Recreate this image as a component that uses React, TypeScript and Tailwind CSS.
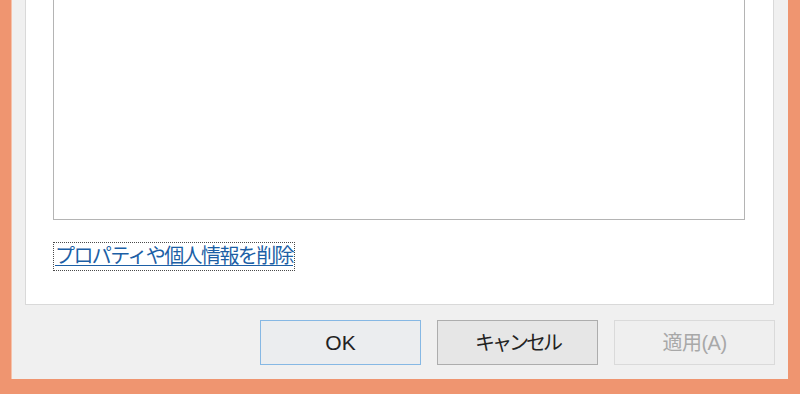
export default function App() {
  return (
    <div className="flex h-[394px] w-[800px] bg-[#ef9570] pb-[15px] pl-[11px] pr-[12px] font-['Liberation_Sans','Noto_Sans_CJK_JP',sans-serif]">
      <div className="flex flex-1 flex-col border-l border-[#f6c2aa] bg-[#f0f0f0]">
        {/* properties panel */}
        <div className="ml-[13px] mr-[14px] h-[305px] border-x border-b border-[#d9d9d9] bg-white pl-[27px]">
          <div className="h-[220px] w-[692px] border-x border-b border-[#b4b4b4] bg-white" />
          <a
            href="#"
            className="mt-[22px] inline-block border border-dotted border-[#4a4a4a] px-[1px] text-[20px] leading-[27px] tracking-[-1.6px] text-[#1c5fa6] underline decoration-1 underline-offset-2"
          >
            プロパティや個人情報を削除
          </a>
        </div>

        <div className="mt-[15px] flex justify-end gap-[16px] pr-[13px]">
          <button className="h-[45px] w-[161px] border border-[#86b8e4] bg-[#ebedef] text-[21px] text-[#222]">
            OK
          </button>
          <button className="h-[45px] w-[161px] border border-[#adadad] bg-[#e6e6e6] text-[20px] tracking-[-3px] text-[#222]">
            キャンセル
          </button>
          <button
            disabled
            className="h-[45px] w-[161px] border border-[#dadada] bg-[#efefef] text-[20px] tracking-[-0.5px] text-[#a8a8a8]"
          >
            適用(A)
          </button>
        </div>
      </div>
    </div>
  );
}
